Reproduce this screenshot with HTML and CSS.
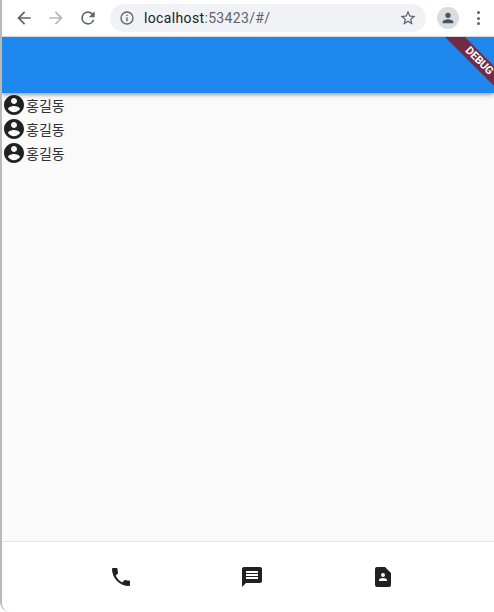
FILE: index.html
```html
<!DOCTYPE html>
<html lang="ko">
<head>
<meta charset="utf-8">
<title>localhost</title>
<link rel="stylesheet" href="styles.css">
</head>
<body>
<div class="window">
  <header class="toolbar">
    <svg class="nav" viewBox="0 0 24 24"><path fill="#5f6368" d="M20 11H7.83l5.59-5.59L12 4l-8 8 8 8 1.41-1.41L7.83 13H20z"/></svg>
    <svg class="nav" viewBox="0 0 24 24"><path fill="#b4b6b9" d="M4 11h12.17l-5.59-5.59L12 4l8 8-8 8-1.41-1.41L16.17 13H4z"/></svg>
    <svg class="nav" viewBox="0 0 24 24"><path fill="#5f6368" d="M17.65 6.35A7.96 7.96 0 0 0 12 4a8 8 0 1 0 7.73 10h-2.08A6 6 0 1 1 12 6c1.66 0 3.14.69 4.22 1.78L13 11h7V4z"/></svg>
    <div class="omnibox">
      <svg class="info" viewBox="0 0 24 24"><path fill="#5f6368" d="M11 7h2v2h-2zm0 4h2v6h-2zm1-9a10 10 0 1 0 0 20 10 10 0 0 0 0-20zm0 18a8 8 0 1 1 0-16 8 8 0 0 1 0 16z"/></svg>
      <span class="url"><span class="host">localhost</span>:53423/#/</span>
      <svg class="star" viewBox="0 0 24 24"><path fill="#5f6368" d="M22 9.24l-7.19-.62L12 2 9.19 8.63 2 9.24l5.46 4.73L5.82 21 12 17.27 18.18 21l-1.63-7.03L22 9.24zM12 15.4l-3.76 2.27 1-4.28-3.32-2.88 4.38-.38L12 6.1l1.71 4.04 4.38.38-3.32 2.88 1 4.28L12 15.4z"/></svg>
    </div>
    <div class="avatar">
      <svg viewBox="0 0 24 24"><path fill="#4a5568" d="M12 12a4 4 0 1 0 0-8 4 4 0 0 0 0 8zm0 2c-2.67 0-8 1.34-8 4v2h16v-2c0-2.66-5.33-4-8-4z"/></svg>
    </div>
    <div class="kebab"><i></i><i></i><i></i></div>
  </header>

  <div class="app">
    <div class="appbar"></div>
    <main class="list">
      <div class="row">
        <svg class="person" viewBox="0 0 24 24"><path fill="#212121" d="M12 2C6.48 2 2 6.48 2 12s4.48 10 10 10 10-4.48 10-10S17.52 2 12 2zm0 3c1.66 0 3 1.34 3 3s-1.34 3-3 3-3-1.34-3-3 1.34-3 3-3zm0 14.2c-2.5 0-4.71-1.28-6-3.22.03-1.99 4-3.08 6-3.08 1.99 0 5.97 1.09 6 3.08-1.29 1.94-3.5 3.22-6 3.22z"/></svg>
        <span>홍길동</span>
      </div>
      <div class="row">
        <svg class="person" viewBox="0 0 24 24"><path fill="#212121" d="M12 2C6.48 2 2 6.48 2 12s4.48 10 10 10 10-4.48 10-10S17.52 2 12 2zm0 3c1.66 0 3 1.34 3 3s-1.34 3-3 3-3-1.34-3-3 1.34-3 3-3zm0 14.2c-2.5 0-4.71-1.28-6-3.22.03-1.99 4-3.08 6-3.08 1.99 0 5.97 1.09 6 3.08-1.29 1.94-3.5 3.22-6 3.22z"/></svg>
        <span>홍길동</span>
      </div>
      <div class="row">
        <svg class="person" viewBox="0 0 24 24"><path fill="#212121" d="M12 2C6.48 2 2 6.48 2 12s4.48 10 10 10 10-4.48 10-10S17.52 2 12 2zm0 3c1.66 0 3 1.34 3 3s-1.34 3-3 3-3-1.34-3-3 1.34-3 3-3zm0 14.2c-2.5 0-4.71-1.28-6-3.22.03-1.99 4-3.08 6-3.08 1.99 0 5.97 1.09 6 3.08-1.29 1.94-3.5 3.22-6 3.22z"/></svg>
        <span>홍길동</span>
      </div>
    </main>
    <nav class="tabs">
      <svg class="tab" viewBox="0 0 24 24"><path fill="#212121" d="M6.62 10.79a15.15 15.15 0 0 0 6.59 6.59l2.2-2.2a1 1 0 0 1 1.02-.24c1.12.37 2.33.57 3.57.57a1 1 0 0 1 1 1V20a1 1 0 0 1-1 1A17 17 0 0 1 3 4a1 1 0 0 1 1-1h3.5a1 1 0 0 1 1 1c0 1.25.2 2.45.57 3.57a1 1 0 0 1-.25 1.02l-2.2 2.2z"/></svg>
      <svg class="tab" viewBox="0 0 24 24"><path fill="#212121" d="M20 2H4c-1.1 0-1.99.9-1.99 2L2 22l4-4h14c1.1 0 2-.9 2-2V4c0-1.1-.9-2-2-2zm-2 12H6v-2h12v2zm0-3H6V9h12v2zm0-3H6V6h12v2z"/></svg>
      <svg class="tab" viewBox="0 0 24 24"><path fill="#212121" d="M14 2H6a2 2 0 0 0-2 2v16a2 2 0 0 0 2 2h12a2 2 0 0 0 2-2V8zm-2 6a2 2 0 1 1 0 4 2 2 0 0 1 0-4zm4 8H8v-.57c0-.81.48-1.53 1.22-1.85a6.95 6.95 0 0 1 5.56 0A2.01 2.01 0 0 1 16 15.43z"/></svg>
    </nav>
    <div class="ribbon">DEBUG</div>
  </div>
</div>
</body>
</html>
```
FILE: styles.css
```css
* { box-sizing: border-box; }
html, body { margin: 0; height: 100%; background: #fff; overflow: hidden; }
body { font-family: "Roboto", "Noto Sans CJK KR", sans-serif; }
.window {
  height: 612px;
  display: flex;
  flex-direction: column;
  border-left: 2px solid #b9b9b9;
  border-bottom-left-radius: 10px;
  overflow: hidden;
  background: #fff;
}
.toolbar {
  height: 37px;
  flex: none;
  display: flex;
  align-items: center;
  background: #fff;
  border-bottom: 1px solid #d4d5d7;
  padding: 0 0 0 12px;
}
.nav { width: 20px; height: 20px; margin-right: 12px; flex: none; }
.omnibox {
  width: 316px;
  height: 28px;
  border-radius: 14px;
  background: #f0f2f5;
  display: flex;
  align-items: center;
  padding: 0 9px 0 9px;
}
.info { width: 16px; height: 16px; flex: none; }
.url { margin-left: 9px; font-size: 14px; color: #5f6368; letter-spacing: .35px; }
.host { color: #202124; }
.star { width: 18px; height: 18px; margin-left: auto; }
.avatar {
  width: 22px; height: 22px; margin-left: 11px; border-radius: 50%;
  background: #dadce0; display: flex; align-items: center; justify-content: center; flex: none;
}
.avatar svg { width: 16px; height: 16px; }
.kebab { margin-left: 18px; display: flex; flex-direction: column; gap: 2.5px; }
.kebab i { display: block; width: 3px; height: 3px; border-radius: 50%; background: #5f6368; }
.app { position: relative; flex: 1; display: flex; flex-direction: column; min-height: 0; background: #fafafa; overflow: hidden; }
.appbar {
  height: 56px; flex: none; background: #1e88ee;
  box-shadow: 0 2px 4px rgba(0,0,0,.35);
  position: relative;
}
.list { flex: 1; }
.row { display: flex; align-items: center; height: 24px; font-size: 14px; color: #303030; }
.person { width: 24px; height: 24px; flex: none; }
.tabs {
  height: 71px; flex: none;
  background: #fff;
  border-top: 1px solid #e4e4e4;
  display: grid;
  grid-template-columns: repeat(3, 131px);
  justify-content: start;
  padding: 23px 0 0 106px;
  align-items: start;
}
.tab { width: 24px; height: 24px; margin-left: 1px; }
.ribbon {
  position: absolute;
  top: 16.5px;
  right: -39.5px;
  width: 110px;
  height: 14px;
  line-height: 14px;
  transform: rotate(45deg);
  background: #742a45;
  color: #fff;
  font-size: 11px;
  font-weight: 700;
  text-align: center;
  letter-spacing: -.2px;
}
```
